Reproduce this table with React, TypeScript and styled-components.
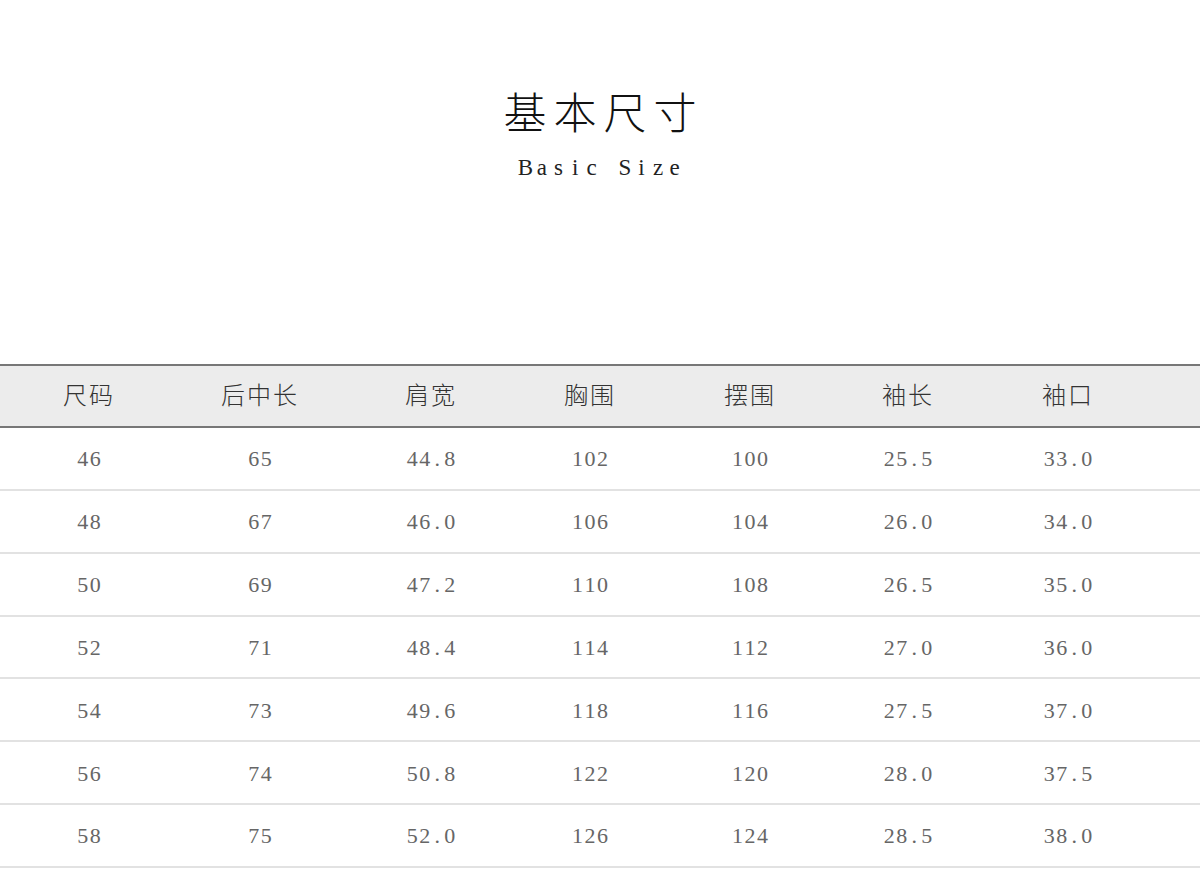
import React, { FC } from "react";
import styled, { createGlobalStyle } from "styled-components";

const GlobalStyle = createGlobalStyle`
  html, body {
    margin: 0;
    padding: 0;
    background: #ffffff;
  }
`;

const columns = ["尺码", "后中长", "肩宽", "胸围", "摆围", "袖长", "袖口"];

const rows: string[][] = [
  ["46", "65", "44.8", "102", "100", "25.5", "33.0"],
  ["48", "67", "46.0", "106", "104", "26.0", "34.0"],
  ["50", "69", "47.2", "110", "108", "26.5", "35.0"],
  ["52", "71", "48.4", "114", "112", "27.0", "36.0"],
  ["54", "73", "49.6", "118", "116", "27.5", "37.0"],
  ["56", "74", "50.8", "122", "120", "28.0", "37.5"],
  ["58", "75", "52.0", "126", "124", "28.5", "38.0"],
];

const gridColumns = "178px 164px 178px 140px 180px 136px 184px 1fr";

const Page = styled.div`
  width: 1200px;
  min-height: 896px;
  background: #fff;
`;

const Hero = styled.header`
  height: 364px;
  display: flex;
  flex-direction: column;
  align-items: center;
  padding-top: 87px;
  box-sizing: border-box;
`;

const Title = styled.h1`
  margin: 0;
  font-family: "Noto Sans CJK SC", "Noto Sans", sans-serif;
  font-weight: 300;
  font-size: 43px;
  line-height: 46px;
  letter-spacing: 7px;
  padding-left: 7px;
  color: #111;
`;

const Subtitle = styled.div`
  margin-top: 22px;
  display: flex;
  font-family: "Liberation Serif", serif;
  font-size: 23px;
  line-height: 26px;
  color: #222;
`;

// fixed-width cell per character, gives the half-width serif look of the original
const Glyph = styled.span<{ $w: number }>`
  display: inline-block;
  width: ${(p) => p.$w}px;
  text-align: center;
`;

const Mono: FC<{ text: string; w: number }> = ({ text, w }) => (
  <>
    {text.split("").map((ch, i) => (
      <Glyph key={i} $w={w}>
        {ch === " " ? "\u00a0" : ch}
      </Glyph>
    ))}
  </>
);

const Table = styled.div`
  display: flex;
  flex-direction: column;
`;

const HeadRow = styled.div`
  display: grid;
  grid-template-columns: ${gridColumns};
  height: 60px;
  align-items: center;
  background: #ececec;
  border-top: 2px solid #777;
  border-bottom: 2px solid #777;
`;

const HeadCell = styled.div`
  text-align: center;
  font-family: "Noto Sans CJK SC", sans-serif;
  font-weight: 300;
  font-size: 24px;
  line-height: 30px;
  letter-spacing: 2px;
  margin-top: -4px;
  color: #333;
`;

const BodyRow = styled.div`
  display: grid;
  grid-template-columns: ${gridColumns};
  height: 60.85px;
  align-items: center;
  border-bottom: 2px solid #e2e2e2;
`;

const Cell = styled.div`
  display: flex;
  justify-content: center;
  padding-top: 2px;
  font-family: "Liberation Serif", serif;
  font-size: 22px;
  color: #666;
`;

const App: FC = () => {
  return (
    <>
      <GlobalStyle />
      <Page>
        <Hero>
          <Title>基本尺寸</Title>
          <Subtitle>
            <Mono text="Basic Size" w={16.6} />
          </Subtitle>
        </Hero>
        <Table>
          <HeadRow>
            {columns.map((c) => (
              <HeadCell key={c}>{c}</HeadCell>
            ))}
          </HeadRow>
          {rows.map((r) => (
            <BodyRow key={r[0]}>
              {r.map((v, i) => (
                <Cell key={i}>
                  <Mono text={v} w={12.5} />
                </Cell>
              ))}
            </BodyRow>
          ))}
        </Table>
      </Page>
    </>
  );
};

export default App;
